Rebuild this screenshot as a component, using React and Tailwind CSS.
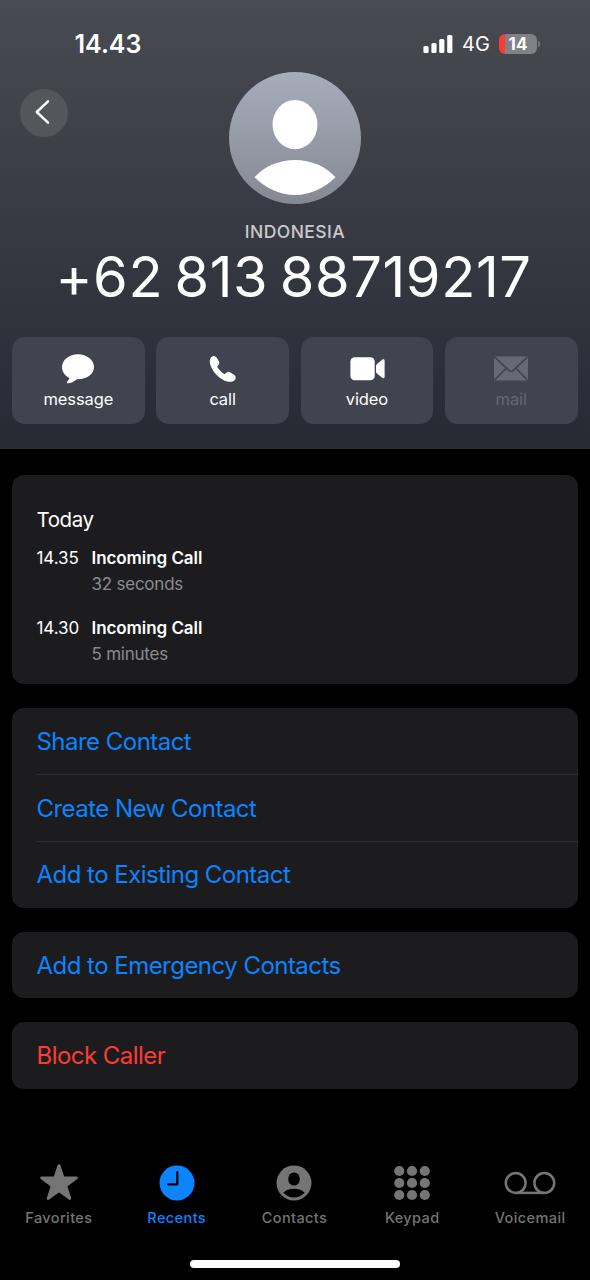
import { useState } from "react";
import clsx from "clsx";

const actions = [
  {
    label: "message",
    icon: (
      <svg width="34" height="32" viewBox="0 0 34 32" fill="currentColor">
        <path d="M17 1.2C8.2 1.2 1 6.700 1 14c0 4.600 2.700 8.400 7 10.700.4.250.4.600.2 1.050-.6 1.300-1.500 2.400-2.100 3.100-.6.800-.2 1.550.8 1.500 2.900-.2 6.200-2.100 8.300-3.700.4-.3.800-.4 1.300-.4 9.200.1 16.500-5 16.500-12.250C33 6.700 25.800 1.200 17 1.200z" />
      </svg>
    ),
  },
  {
    label: "call",
    icon: (
      <svg width="34" height="32" viewBox="0 0 34 32" fill="currentColor">
        <path d="M3.800 8c0-2.600 1.500-4.900 3.900-4.900 1.600 0 2.600.9 3.700 2.600l1.400 2.200c.8 1.300.7 2.700-.2 3.800l-.9 1.100c-.5.600-.5 1.100-.1 1.700 1.700 2.600 3.700 4.600 6.300 6.200.6.400 1.100.3 1.600-.2l.9-.8c1.200-1 2.600-1.100 3.900-.3l2.700 1.700c1.700 1.100 2.700 2.200 2.700 3.600 0 2.400-2.600 4.100-5.500 4.100-9.500 0-20.400-11.700-20.400-20.800z" />
      </svg>
    ),
  },
  {
    label: "video",
    icon: (
      <svg width="36" height="32" viewBox="0 0 36 32" fill="currentColor">
        <rect x="1.400" y="4.200" width="24.300" height="23" rx="4.300" />
        <path d="M27 13.100v5.300c0 .9.300 1.500 1 2.100l5.200 4.300c1.100.9 2.400.5 2.400-1V7.700c0-1.500-1.300-1.900-2.400-1L28 11c-.7.600-1 1.200-1 2.100z" />
      </svg>
    ),
  },
  {
    label: "mail",
    disabled: true,
    icon: (
      <svg width="34" height="32" viewBox="0 0 34 32">
        <rect x="0" y="3.500" width="34" height="24" rx="1.500" fill="currentColor" />
        <path
          d="M.7 4.200l13.800 13c1.500 1.400 3.500 1.400 5 0l13.800-13M.7 26.800l11.600-11.600M33.300 26.800L21.700 15.200"
          fill="none"
          stroke="#41434f"
          strokeWidth="1.600"
        />
      </svg>
    ),
  },
];

const calls = [
  { time: "14.35", type: "Incoming Call", duration: "32 seconds" },
  { time: "14.30", type: "Incoming Call", duration: "5 minutes" },
];

const groups = [
  ["Share Contact", "Create New Contact", "Add to Existing Contact"],
  ["Add to Emergency Contacts"],
  ["Block Caller"],
];

const tabs = [
  {
    label: "Favorites",
    icon: (
      <svg width="40" height="40" viewBox="0 0 40 40" fill="currentColor" stroke="currentColor" strokeWidth="3" strokeLinejoin="round">
        <path d="M20 2.700l4.100 12.200h13.300l-10.700 7.800 4 12.700L20 27.600 9.300 35.400l4-12.700L2.600 14.900h13.300z" />
      </svg>
    ),
  },
  {
    label: "Recents",
    icon: (
      <svg width="40" height="40" viewBox="0 0 40 40">
        <circle cx="20" cy="20" r="17.500" fill="currentColor" />
        <path d="M20.300 9v12.300h-9" fill="none" stroke="#000" strokeWidth="2.200" strokeLinecap="round" strokeLinejoin="round" />
      </svg>
    ),
  },
  {
    label: "Contacts",
    icon: (
      <svg width="40" height="40" viewBox="0 0 40 40">
        <circle cx="20" cy="20" r="17.500" fill="currentColor" />
        <ellipse cx="20" cy="16" rx="5.800" ry="6.600" fill="#000" />
        <path d="M9.400 29.800C11.500 27 15.500 25.700 20 25.700s8.500 1.300 10.600 4.100C27.800 32.800 24.100 34.500 20 34.500s-7.800-1.700-10.600-4.700z" fill="#000" />
      </svg>
    ),
  },
  {
    label: "Keypad",
    icon: (
      <svg width="40" height="40" viewBox="0 0 40 40" fill="currentColor">
        {[8, 20, 32].map((y) =>
          [7.3, 20, 32.800].map((x) => <circle key={`${x}-${y}`} cx={x} cy={y} r="5.100" />)
        )}
      </svg>
    ),
  },
  {
    label: "Voicemail",
    icon: (
      <svg width="52" height="40" viewBox="0 0 52 40" fill="none" stroke="currentColor" strokeWidth="2.500">
        <circle cx="11.700" cy="20" r="9.900" />
        <circle cx="40.300" cy="20" r="9.900" />
        <path d="M11.700 29.900h28.600" />
      </svg>
    ),
  },
];

function StatusBar() {
  return (
    <div className="flex h-[72px] items-center justify-between pt-4 pr-[50px] pl-[74.500px]">
      <span className="text-[25px] leading-[30px] font-semibold">14.43</span>
      <div className="flex items-center">
        <svg width="30" height="20" viewBox="0 0 30 20" fill="currentColor">
          <rect x="0.400" y="12" width="5.200" height="7" rx="1.500" />
          <rect x="8.400" y="9" width="5.200" height="10" rx="1.500" />
          <rect x="16.200" y="5" width="5.200" height="14" rx="1.500" />
          <rect x="24.200" y="1" width="5.200" height="18" rx="1.500" />
        </svg>
        <span className="ml-[9px] w-[37px] text-[20px] leading-6">4G</span>
        <div className="flex h-[20px] w-[38px] items-center justify-center overflow-hidden rounded-[6px] bg-[linear-gradient(90deg,#ff3b30_6px,#808187_6px)]">
          <span className="text-[17px] leading-5 font-bold">14</span>
        </div>
        <span className="ml-[1px] h-[6px] w-[2px] rounded-r-full bg-[#74757a]" />
      </div>
    </div>
  );
}

function Avatar() {
  return (
    <div className="h-[132px] w-[132px] rounded-full bg-linear-to-b from-[#a6adbb] to-[#858993]">
      <svg width="132" height="132" viewBox="0 0 132 132" fill="#fff">
        <ellipse cx="66" cy="52.600" rx="22.500" ry="24.600" />
        <path d="M25.500 105.300C35 94.500 50 88 66 88s31 6.500 40.500 17.300C95 116.500 81 123 66 123s-29-6.500-40.500-17.700z" />
      </svg>
    </div>
  );
}

export default function App() {
  const [activeTab, setActiveTab] = useState("Recents");

  return (
    <div className="flex h-[1280px] w-[590px] flex-col overflow-hidden bg-black font-['Inter',sans-serif] text-white">
      {/* ---------------- HEADER ---------------- */}
      <header className="h-[449px] shrink-0 bg-linear-to-b from-[#494b53] to-[#282a33]">
        <StatusBar />
        <div className="grid grid-cols-[1fr_132px_1fr]">
          <button
            type="button"
            className="mt-[16.700px] ml-5 flex h-12 w-12 items-center justify-center rounded-full bg-[#54565b]"
            aria-label="Back"
          >
            <svg width="16" height="26" viewBox="0 0 16 26" className="mr-[5px] mb-px" fill="none" stroke="currentColor" strokeWidth="2.500" strokeLinecap="round" strokeLinejoin="round">
              <path d="M14 2.300L2.800 13 14 23.700" />
            </svg>
          </button>
          <Avatar />
        </div>
        <p className="mt-[17px] text-center text-[17.500px] leading-[22px] font-medium tracking-[0.450px] text-[#c9cacd]">
          INDONESIA
        </p>
        <h1 className="mt-px pr-[3px] text-center text-[56px] leading-[66px] font-normal tracking-[0.600px] whitespace-nowrap [font-feature-settings:'calt'_0] [word-spacing:-5px]">
          +62 813 88719217
        </h1>

        <div className="mt-[27px] grid grid-cols-4 gap-[11.700px] pr-[12.500px] pl-3">
          {actions.map((action) => (
            <button
              key={action.label}
              type="button"
              disabled={action.disabled}
              className={clsx(
                "flex h-[87px] flex-col items-center rounded-[13px] bg-[#41434f] pt-4",
                action.disabled && "text-[#666874]"
              )}
            >
              {action.icon}
              <span className="mt-[3px] text-[16.500px] leading-[22px] tracking-[-0.100px]">{action.label}</span>
            </button>
          ))}
        </div>
      </header>

      {/* ---------------- CALL HISTORY ---------------- */}
      <main className="flex flex-1 flex-col gap-6 pt-[26px] pr-[12.500px] pl-3">
        <section className="h-[208.800px] rounded-[12px] bg-[#1c1c1e] px-[24.500px] pt-[30px]">
          <h2 className="text-[20.500px] leading-[30px] tracking-[-0.400px]">Today</h2>
          <div className="mt-[10px] flex flex-col gap-[18px]">
            {calls.map((call) => (
              <div key={call.time} className="flex text-[17px] leading-[26px]">
                <span className="w-[55px] tracking-[-0.050px]">{call.time}</span>
                <div>
                  <p className="font-semibold tracking-[-0.060px]">{call.type}</p>
                  <p className="tracking-[-0.230px] text-[#8b8b90]">{call.duration}</p>
                </div>
              </div>
            ))}
          </div>
        </section>

        {/* ---------------- CONTACT OPTIONS ---------------- */}
        {groups.map((items) => (
          <section key={items[0]} className="rounded-[12px] bg-[#1c1c1e] pl-6">
            {items.map((item, i) => (
              <button
                key={item}
                type="button"
                className={clsx(
                  "flex h-[66.600px] w-full items-center border-[#2f2f32] pl-[0.500px] text-[24px] tracking-[-0.530px]",
                  item === "Block Caller" ? "text-[#fa3c34]" : "text-[#0a84ff]",
                  i > 0 ? "border-t pt-px" : "pt-[2px]"
                )}
              >
                {item}
              </button>
            ))}
          </section>
        ))}
      </main>

      {/* ---------------- TAB BAR ---------------- */}
      <nav className="grid h-[97px] w-[589px] shrink-0 grid-cols-5">
        {tabs.map((tab) => (
          <button
            key={tab.label}
            type="button"
            onClick={() => setActiveTab(tab.label)}
            className={clsx(
              "flex flex-col items-center",
              activeTab === tab.label ? "text-[#0a84ff]" : "text-[#757575]"
            )}
          >
            {tab.icon}
            <span className="mt-[4.500px] text-[14.500px] leading-5 font-medium tracking-[0.400px]">{tab.label}</span>
          </button>
        ))}
      </nav>
      <div className="mx-auto mb-3 h-2 w-[210px] shrink-0 rounded-full bg-white" />
    </div>
  );
}
